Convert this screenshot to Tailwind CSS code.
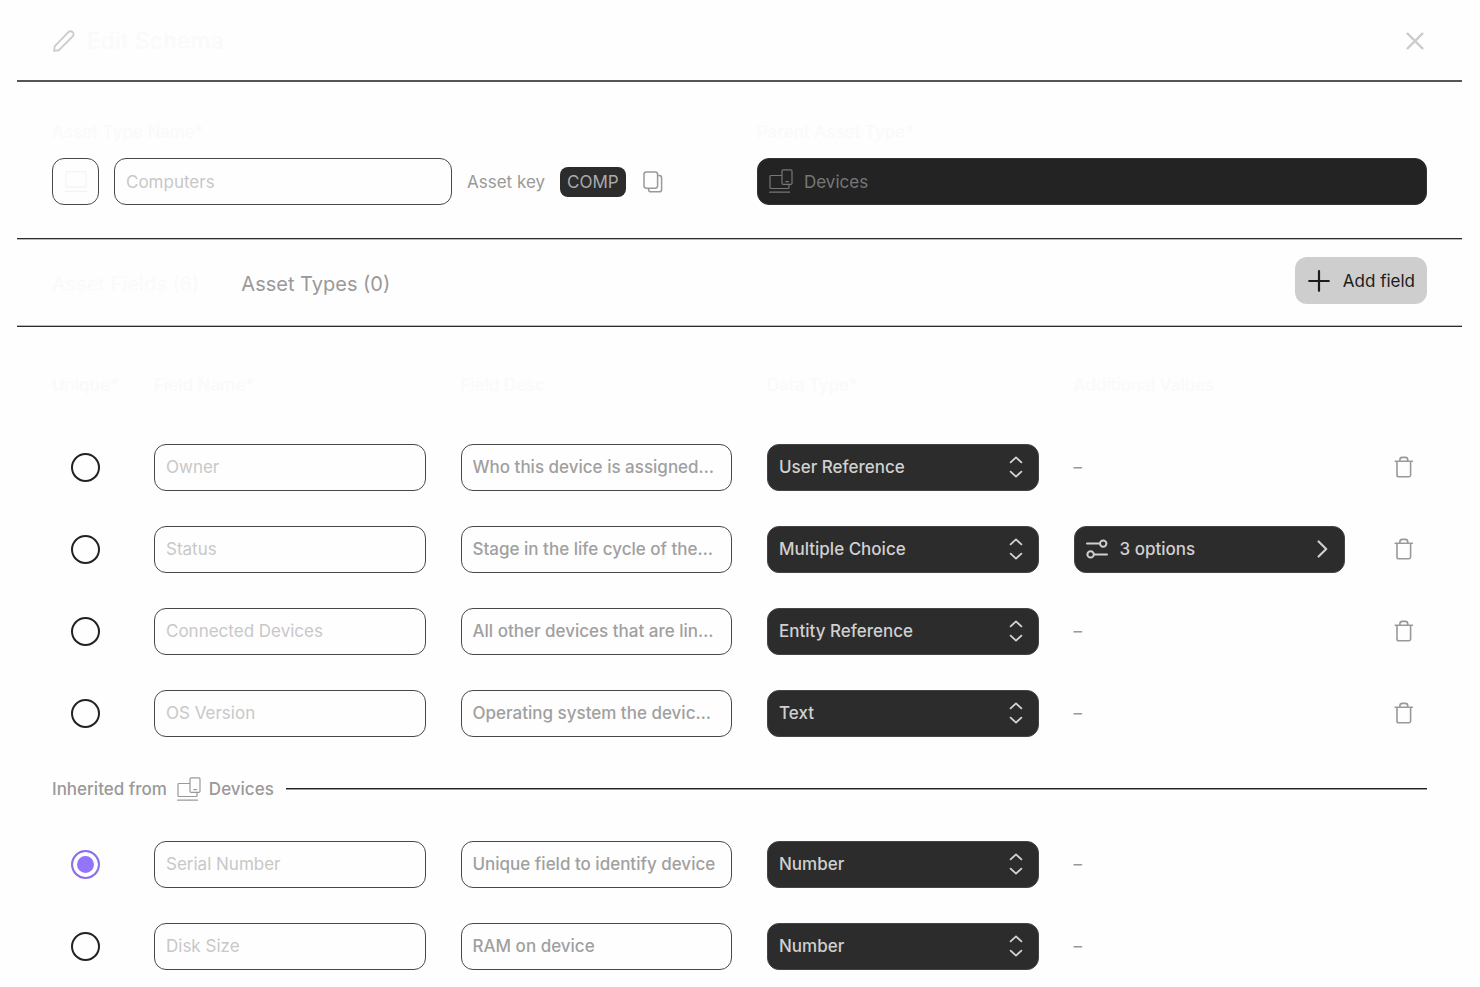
<!DOCTYPE html>
<html lang="en">
<head>
<meta charset="utf-8">
<meta name="viewport" content="width=device-width, initial-scale=1">
<title>Edit Schema</title>
<script src="https://cdn.jsdelivr.net/npm/@tailwindcss/browser@4"></script>
</head>
<body class="bg-[#fefefe] font-['Inter','Liberation_Sans',sans-serif] text-[17px] leading-6 text-[#999]">

<svg class="hidden" aria-hidden="true">
  <symbol id="devices" viewBox="0 0 24 24" fill="none" stroke="currentColor" stroke-width="1.2" stroke-linecap="round" stroke-linejoin="round">
    <path d="M12.5 6.500H2a1 1 0 0 0-1 1v11a1 1 0 0 0 1 1h17a1 1 0 0 0 1-1v-3"/>
    <rect x="13" y="0.8" width="10" height="14.6" rx="1.2"/>
    <path d="M16.8 12.6h2.6M0.6 23.200h20"/>
  </symbol>
  <symbol id="updown" viewBox="0 0 14 22" fill="none" stroke="currentColor" stroke-width="1.8" stroke-linecap="round" stroke-linejoin="round">
    <path d="M1.600 6.400 7 1.400l5.400 5M1.600 15.600l5.400 5 5.400-5"/>
  </symbol>
  <symbol id="trash" viewBox="0 0 20 22" fill="none" stroke="currentColor" stroke-width="1.600" stroke-linecap="round" stroke-linejoin="round">
    <path d="M1.200 5.200h17.200M3 5.200v13.800a1.800 1.800 0 0 0 1.800 1.800h10a1.800 1.800 0 0 0 1.800-1.800V5.200M5.900 5.200v-1.400A2.400 2.400 0 0 1 8.300 1.400h3a2.400 2.400 0 0 1 2.400 2.400v1.400"/>
  </symbol>
</svg>

<main class="ml-[17px] mr-[18px]">
  <header class="flex h-[82px] items-center justify-between border-b-2 border-[#555] px-[35px] pt-[2px]">
    <div class="flex items-center gap-[11px]">
      <svg class="size-6 text-[#ccc]" viewBox="0 0 24 24" fill="none" stroke="currentColor" stroke-width="1.900" stroke-linejoin="round" aria-hidden="true">
        <path d="M2 21.900l.8-4.700L16.400 3.200a3 3 0 0 1 4.300 4.200L6.900 21.200z"/>
      </svg>
      <h1 class="text-[23px] leading-8 font-medium text-[#fafafa]">Edit Schema</h1>
    </div>
    <button type="button" aria-label="Close" class="flex size-6 items-center justify-center text-[#ccc]">
      <svg class="size-[18px]" viewBox="0 0 18 18" fill="none" stroke="currentColor" stroke-width="2.300" stroke-linecap="round"><path d="M1.600 1.600l14.800 14.800M16.400 1.600 1.600 16.400"/></svg>
    </button>
  </header>

  <section class="grid grid-cols-2 gap-[35px] border-b border-[#2c2c2c] px-[35px] pt-[38px] pb-[33px] shadow-[0_1px_0_#b8b8b8]">
    <div class="flex flex-col gap-[14px]">
      <label for="type-name" class="font-medium text-[#fafafa]">Asset Type Name*</label>
      <div class="flex items-center gap-[15px]">
        <button type="button" aria-label="Choose icon" class="flex size-[47px] shrink-0 items-center justify-center rounded-xl border border-[#484848] text-[#f3f3f3]">
          <svg class="size-6" viewBox="0 0 24 24" fill="none" stroke="currentColor" stroke-width="1.200" stroke-linecap="round"><rect x="2" y="1.600" width="20" height="15.600" rx="1"/><path d="M1 21.400h22"/></svg>
        </button>
        <input id="type-name" type="text" value="Computers" class="h-[47px] w-[338px] min-w-0 rounded-xl border border-[#484848] px-[11px] text-[#c8c8c8]">
        <span class="whitespace-nowrap">Asset key</span>
        <span class="rounded-lg bg-[#2c2c2c] px-[7px] py-[3px] text-[#aaa]">COMP</span>
        <button type="button" aria-label="Copy asset key" class="flex size-6 shrink-0 items-center justify-center">
          <svg class="h-[22px] w-5" viewBox="0 0 20 22" fill="none" stroke="currentColor" stroke-width="1.500" stroke-linejoin="round"><rect x="1" y="1" width="13.600" height="16.200" rx="2.400"/><path d="M14.600 4.600h1.600a2.400 2.400 0 0 1 2.400 2.400v11.400a2.400 2.400 0 0 1-2.400 2.400H8a2.400 2.400 0 0 1-2.400-2.400v-1.200"/></svg>
        </button>
      </div>
    </div>
    <div class="flex flex-col gap-[14px]">
      <label for="parent-type" class="font-medium text-[#fafafa]">Parent Asset Type*</label>
      <div class="relative">
        <select id="parent-type" disabled class="block h-[47px] w-full appearance-none rounded-xl border border-[#333] bg-[#232323] pl-[46px] text-[#777] opacity-100">
          <option>Devices</option>
        </select>
        <svg class="pointer-events-none absolute top-[11px] left-3 size-6 text-[#777]" aria-hidden="true"><use href="#devices"/></svg>
      </div>
    </div>
  </section>

  <section class="flex items-end justify-between border-b border-[#2c2c2c] px-[35px] pt-[18px] pb-[22px] shadow-[inset_0_-1px_0_#b8b8b8]">
    <div role="tablist" class="flex gap-[42px] text-xl leading-10">
      <button type="button" role="tab" aria-selected="true" class="text-[#fafafa]">Asset Fields (6)</button>
      <button type="button" role="tab" aria-selected="false">Asset Types (0)</button>
    </div>
    <button type="button" class="flex h-[47px] items-center gap-3 rounded-xl bg-[#cecece] px-3 text-[#1c1c1c]">
      <svg class="size-6" viewBox="0 0 24 24" fill="none" stroke="currentColor" stroke-width="2.200" stroke-linecap="round" aria-hidden="true"><path d="M12 2.200v19.600M2.200 12h19.600"/></svg>
      Add field
    </button>
  </section>

  <div class="px-[35px]">
    <table class="w-full table-fixed text-left">
      <colgroup><col class="w-[102px]"><col><col><col><col><col class="w-[47px]"></colgroup>
      <thead>
        <tr class="h-[99px] align-top whitespace-nowrap text-[#fafafa]">
          <th scope="col" class="pt-[46px] font-medium">Unique*</th>
          <th scope="col" class="pt-[46px] font-medium">Field Name*</th>
          <th scope="col" class="pt-[46px] font-medium">Field Desc</th>
          <th scope="col" class="pt-[46px] font-medium">Data Type*</th>
          <th scope="col" class="pt-[46px] font-medium">Additional Values</th>
          <td></td>
        </tr>
      </thead>
      <tbody id="own-fields"></tbody>
      <tbody>
        <tr class="h-[69px]">
          <th scope="rowgroup" colspan="6" class="font-medium">
            <div class="flex items-center">
              <span>Inherited from</span>
              <svg class="mr-2 ml-[10px] size-6" aria-hidden="true"><use href="#devices"/></svg>
              <span>Devices</span>
              <span class="ml-3 h-px flex-1 bg-[#222] shadow-[0_1px_0_#999]"></span>
            </div>
          </th>
        </tr>
      </tbody>
      <tbody id="inherited-fields"></tbody>
    </table>
  </div>
</main>

<script>
  const types = ["User Reference", "Multiple Choice", "Entity Reference", "Text", "Number"];

  const ownFields = [
    { name: "Owner", desc: "Who this device is assigned…", type: "User Reference" },
    { name: "Status", desc: "Stage in the life cycle of the…", type: "Multiple Choice", options: 3 },
    { name: "Connected Devices", desc: "All other devices that are lin…", type: "Entity Reference" },
    { name: "OS Version", desc: "Operating system the devic…", type: "Text" },
  ];
  const inheritedFields = [
    { name: "Serial Number", desc: "Unique field to identify device", type: "Number", unique: true },
    { name: "Disk Size", desc: "RAM on device", type: "Number" },
  ];

  const optionsButton = (f) => `
    <button type="button" class="flex h-[47px] w-full items-center rounded-xl border border-[#444] bg-[#2c2c2c] pr-4 pl-[11px] font-medium text-[#d0d0d0]">
      <svg class="mr-3 h-5 w-[22px]" viewBox="0 0 22 20" fill="none" stroke="currentColor" stroke-width="2" stroke-linecap="round" aria-hidden="true">
        <path d="M1 4.600h12.600M8.600 15.400H21"/><circle cx="17.200" cy="4.600" r="3.200"/><circle cx="4.600" cy="15.400" r="3.200"/>
      </svg>
      <span class="flex-1 text-left">${f.options} options</span>
      <svg class="h-[18px] w-[11px]" viewBox="0 0 11 18" fill="none" stroke="currentColor" stroke-width="2.200" stroke-linecap="round" stroke-linejoin="round" aria-hidden="true"><path d="M1.600 1.500 9.200 9l-7.600 7.500"/></svg>
    </button>`;

  const row = (f, removable) => `
    <tr class="h-[82px]">
      <td><input type="radio" name="unique" aria-label="${f.name} is unique" ${f.unique ? "checked" : ""}
        class="mx-[19px] block size-[29px] appearance-none rounded-full border-2 border-[#222] checked:border-[#8b72e8] checked:bg-[#9474fb] checked:shadow-[inset_0_0_0_4px_#fefefe]"></td>
      <td class="pr-[35px]"><input type="text" aria-label="Field name" value="${f.name}"
        class="block h-[47px] w-full rounded-xl border border-[#484848] px-[11px] text-ellipsis text-[#c8c8c8]"></td>
      <td class="pr-[35px]"><input type="text" aria-label="Field description" value="${f.desc}"
        class="block h-[47px] w-full rounded-xl border border-[#484848] px-[11px] font-medium text-ellipsis text-[#a0a0a0]"></td>
      <td class="pr-[35px]"><div class="relative">
        <select aria-label="Data type" class="block h-[47px] w-full appearance-none rounded-xl border border-[#444] bg-[#2c2c2c] px-[11px] font-medium text-[#d0d0d0]">
          ${types.map((t) => `<option ${t === f.type ? "selected" : ""}>${t}</option>`).join("")}
        </select>
        <svg class="pointer-events-none absolute top-3 right-4 h-[22px] w-[14px] text-[#d4d4d4]" aria-hidden="true"><use href="#updown"/></svg>
      </div></td>
      <td class="pr-[35px]">${f.options ? optionsButton(f) : "–"}</td>
      <td>${removable ? `<button type="button" aria-label="Delete ${f.name}" class="mx-auto flex size-6 items-center justify-center"><svg class="h-[22px] w-5" aria-hidden="true"><use href="#trash"/></svg></button>` : ""}</td>
    </tr>`;

  document.getElementById("own-fields").innerHTML = ownFields.map((f) => row(f, true)).join("");
  document.getElementById("inherited-fields").innerHTML = inheritedFields.map((f) => row(f, false)).join("");
</script>
</body>
</html>
